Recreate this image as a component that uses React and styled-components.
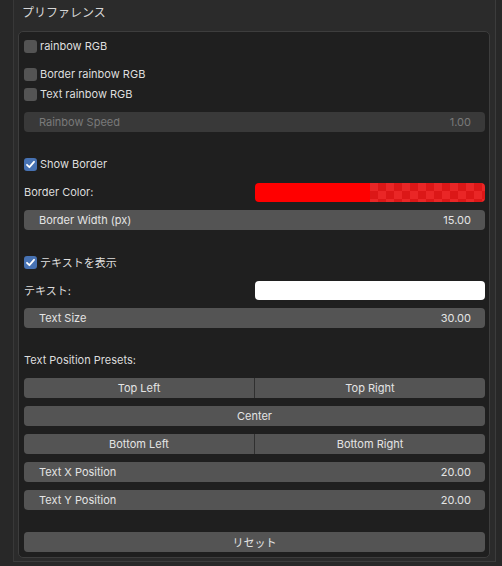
import React from 'react';
import styled, { createGlobalStyle } from 'styled-components';

const GlobalStyle = createGlobalStyle`
  html, body {
    margin: 0;
    padding: 0;
    background: #222222;
  }
  body {
    font-family: Inter, "Noto Sans CJK JP", sans-serif;
    font-size: 11px;
    color: #dcdcdc;
  }
`;

const Screen = styled.div`
  width: 502px;
  height: 566px;
  overflow: hidden;
  box-sizing: border-box;
  padding-left: 13px;
  background: #282828;
`;

const Panel = styled.div`
  width: 483px;
  box-sizing: border-box;
  background: #2b2b2b;
  border-left: 1px solid #383838;
  border-right: 1px solid #3c3c3c;
  border-bottom: 1px solid #3c3c3c;
  padding: 0 5px 3px 4px;
`;

const Header = styled.div`
  height: 31px;
  line-height: 25px;
  padding-left: 4px;
  font-size: 12px;
  color: #d6d6d6;
`;

const Box = styled.div`
  background: #1f1f1f;
  border: 1px solid #3d3d3d;
  border-radius: 5px;
  padding: 4px 4px 5px 5px;
  display: flex;
  flex-direction: column;
  gap: 22px;
`;

const Section = styled.div`
  display: flex;
  flex-direction: column;
  gap: ${p => (p.$tight ? 0 : 8)}px;
`;

const Row = styled.div`
  height: 20px;
  display: flex;
  align-items: center;
`;

const CheckRow = styled.label`
  height: 20px;
  display: flex;
  align-items: center;
  gap: 3px;
  color: #dedede;
`;

const Box13 = styled.span`
  width: 13px;
  height: 13px;
  border-radius: 3px;
  background: ${p => (p.$on ? '#4772b3' : '#545454')};
  display: flex;
  align-items: center;
  justify-content: center;
`;

const Label = styled.span`
  color: #dcdcdc;
`;

const PropRow = styled.div`
  height: 20px;
  display: grid;
  grid-template-columns: 231px 1fr;
  align-items: center;
`;

const Slider = styled.div`
  height: 20px;
  box-sizing: border-box;
  border-radius: 4px;
  background: ${p => (p.$disabled ? '#393939' : '#545454')};
  color: ${p => (p.$disabled ? '#7a7a7a' : '#e4e4e4')};
  display: flex;
  align-items: center;
  justify-content: space-between;
  padding: 0 14px 0 15px;
`;

const ButtonRow = styled.div`
  height: 20px;
  display: flex;
  gap: 1px;
  background: #303030;
  border-radius: 4px;
`;

const Button = styled.div`
  flex: 1;
  height: 20px;
  background: #545454;
  color: #e4e4e4;
  display: flex;
  align-items: center;
  justify-content: center;
  border-radius: 4px;
  &:not(:last-child) {
    border-top-right-radius: 0;
    border-bottom-right-radius: 0;
  }
  &:not(:first-child) {
    border-top-left-radius: 0;
    border-bottom-left-radius: 0;
  }
`;

const ColorField = styled.div`
  height: 19px;
  border-radius: 4px;
  overflow: hidden;
  display: grid;
  grid-template-columns: 115px 1fr;
  box-shadow: inset 0 0 0 1px rgba(60, 0, 0, 0.35);
`;

const SolidPart = styled.div`
  background: #ff0000;
`;

const AlphaPart = styled.div`
  background-color: #ea2626;
  background-image:
    linear-gradient(45deg, #dc1717 25%, transparent 25%, transparent 75%, #dc1717 75%),
    linear-gradient(45deg, #dc1717 25%, transparent 25%, transparent 75%, #dc1717 75%);
  background-size: 16px 16px;
  background-position: 0 0, 8px 8px;
`;

const TextField = styled.div`
  height: 19px;
  border-radius: 4px;
  background: #ffffff;
`;

const Tick = () => (
  <svg width="11" height="11" viewBox="0 0 11 11">
    <path d="M2 5.8 L4.4 8.2 L9 2.8" fill="none" stroke="#fff" strokeWidth="1.8" strokeLinecap="round" strokeLinejoin="round" />
  </svg>
);

const Check = ({ on, children }) => (
  <CheckRow>
    <Box13 $on={on}>{on && <Tick />}</Box13>
    {children}
  </CheckRow>
);

const NumSlider = ({ label, value, disabled }) => (
  <Slider $disabled={disabled}>
    <span>{label}</span>
    <span>{value}</span>
  </Slider>
);

export default function App() {
  return (
    <>
      <GlobalStyle />
      <Screen>
        <Panel>
          <Header>プリファレンス</Header>
          <Box>
            <Section>
              <Check>rainbow RGB</Check>
              <Section $tight>
                <Check>Border rainbow RGB</Check>
                <Check>Text rainbow RGB</Check>
              </Section>
              <NumSlider label="Rainbow Speed" value="1.00" disabled />
            </Section>

            <Section>
              <Check on>Show Border</Check>
              <PropRow>
                <Label>Border Color:</Label>
                <ColorField>
                  <SolidPart />
                  <AlphaPart />
                </ColorField>
              </PropRow>
              <NumSlider label="Border Width (px)" value="15.00" />
            </Section>

            <Section>
              <Check on>テキストを表示</Check>
              <PropRow>
                <Label>テキスト:</Label>
                <TextField />
              </PropRow>
              <NumSlider label="Text Size" value="30.00" />
            </Section>

            <Section>
              <Row>
                <Label>Text Position Presets:</Label>
              </Row>
              <ButtonRow>
                <Button>Top Left</Button>
                <Button>Top Right</Button>
              </ButtonRow>
              <ButtonRow>
                <Button>Center</Button>
              </ButtonRow>
              <ButtonRow>
                <Button>Bottom Left</Button>
                <Button>Bottom Right</Button>
              </ButtonRow>
              <NumSlider label="Text X Position" value="20.00" />
              <NumSlider label="Text Y Position" value="20.00" />
            </Section>

            <Section>
              <ButtonRow>
                <Button>リセット</Button>
              </ButtonRow>
            </Section>
          </Box>
        </Panel>
      </Screen>
    </>
  );
}
